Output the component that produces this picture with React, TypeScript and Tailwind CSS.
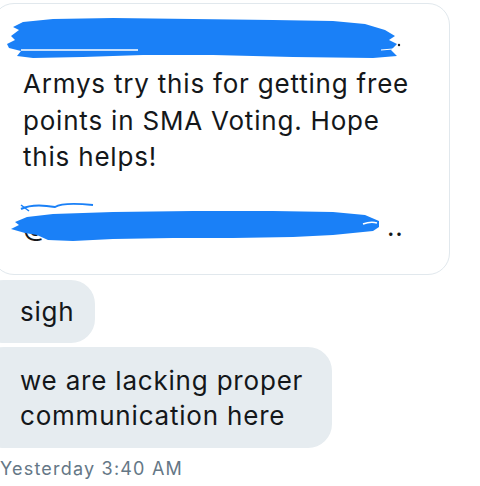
import React from "react";

const font = { fontFamily: '"Inter", "Roboto", "Liberation Sans", sans-serif' };

function Scribble1() {
  return (
    <svg width="480" height="60" viewBox="0 0 480 60" className="absolute left-0 top-0">
      <path
        d="M14 44 L22 40 L18 36 L26 30 L20 27 L30 22 L60 19 L120 18 L200 19 L280 20 L340 21 L372 24 L392 30 L402 36 L396 40 L404 44 L398 50 L404 56 L380 58 L300 57 L220 55 L150 55 L90 57 L40 58 L24 56 L28 51 L16 48 Z"
        fill="#1a80f7"
      />
      <path d="M28 50 L145 50" stroke="#ffffff" strokeWidth="1.5" />
      <path d="M388 50 L400 49" stroke="#ffffff" strokeWidth="1" />
      <circle cx="406" cy="45" r="1.2" fill="#222" />
    </svg>
  );
}

function Scribble2() {
  return (
    <svg width="480" height="50" viewBox="0 0 480 50" className="absolute left-0 top-0">
      <path
        d="M18 32 L26 28 L22 25 L34 20 L60 17 L120 15 L200 14 L280 14 L340 15 L372 18 L386 24 L386 30 L380 34 L340 38 L300 40 L240 41 L180 41 L120 42 L80 44 L55 43 L44 38 L32 36 Z"
        fill="#1a80f7"
      />
      <path d="M28 12 Q40 6 62 10 Q70 5 100 8" stroke="#1a80f7" strokeWidth="2" fill="none" />
      <path d="M28 8 L36 14" stroke="#1a80f7" strokeWidth="1.5" fill="none" />
      <path d="M370 27 Q378 24 384 26" stroke="#ffffff" strokeWidth="1.5" fill="none" />
    </svg>
  );
}

export default function App() {
  return (
    <div className="w-[480px] h-[486px] bg-white overflow-hidden flex flex-col" style={font}>
      <div className="ml-[-8px] mt-[3px] w-[458px] h-[272px] border border-[#e1e8ed] rounded-[22px] flex flex-col pl-[30px] pr-[16px] text-[26px] leading-[36.5px] tracking-[0.8px] text-[#14171a] relative shrink-0">
        <div className="relative h-[60px] shrink-0">
          <div className="absolute left-[-30px] top-[-4px] w-[480px] h-[60px]">
            <Scribble1 />
          </div>
        </div>
        <div className="mt-[2px]">
          Armys try this for getting free points in SMA Voting. Hope this helps!
        </div>
        <div className="relative mt-[33px] h-[37px]">
          <span>@</span>
          <span className="absolute left-[364px] top-0">..</span>
          <div className="absolute left-[-30px] top-[-12px] w-[480px] h-[50px]">
            <Scribble2 />
          </div>
        </div>
      </div>
      <div className="mt-[5px] ml-[-20px] w-[115px] h-[63px] bg-[#e6ecf0] rounded-[24px] pl-[40px] flex items-center text-[26px] tracking-[0.8px] text-[#14171a] shrink-0">
        sigh
      </div>
      <div className="mt-[4px] ml-[-20px] w-[352px] h-[101px] bg-[#e6ecf0] rounded-[24px] pl-[40px] flex flex-col justify-center text-[26px] leading-[35px] tracking-[0.8px] text-[#14171a] shrink-0">
        <div>we are lacking proper</div>
        <div>communication here</div>
      </div>
      <div className="mt-[10px] text-[18px] leading-[22px] tracking-[1.2px] text-[#657786] shrink-0">Yesterday 3:40 AM</div>
    </div>
  );
}
